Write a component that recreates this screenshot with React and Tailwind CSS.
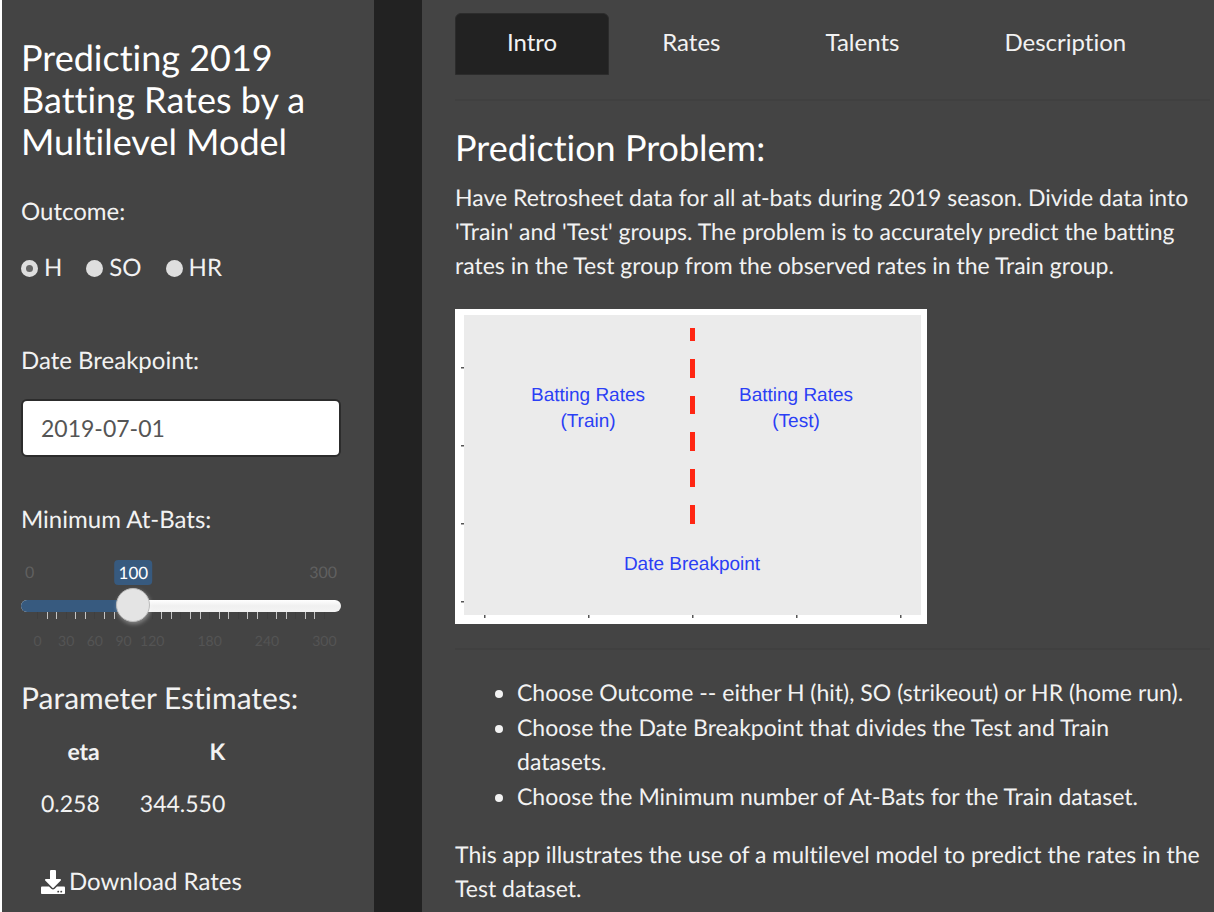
import { useState } from "react";
import { FaDownload } from "react-icons/fa";

const TABS = ["Intro", "Rates", "Talents", "Description"];
const OUTCOMES = ["H", "SO", "HR"];
const SCALE_LABELS = ["0", "30", "60", "90", "120", "", "180", "", "240", "", "300"];
const MAX_AT_BATS = 300;

const DASHES = [
  [19, 13],
  [50, 19],
  [87, 18],
  [123, 19],
  [160, 18],
  [196, 19],
];

function AtBatsSlider() {
  const [value, setValue] = useState(100);
  const ratio = value / MAX_AT_BATS;
  const center = `calc(17px + (100% - 34px) * ${ratio})`;

  return (
    <div>
      <label htmlFor="min-at-bats" className="block">
        Minimum At-Bats:
      </label>
      <div className="relative mt-6 flex h-6 items-center justify-between px-1 text-[16px] leading-6 text-[#606060]">
        <span>0</span>
        <span>300</span>
        <output
          htmlFor="min-at-bats"
          className="absolute -top-px -translate-x-1/2 rounded-[4px] bg-[#375a7f] px-1 text-[17px] leading-[25px] text-white"
          style={{ left: center }}
        >
          {value}
        </output>
      </div>
      <div className="relative mt-[3px] flex h-9 items-center">
        <div className="h-3 w-full overflow-hidden rounded-full bg-linear-to-b from-white via-[#f0f0f0] to-[#f4f4f4]">
          <div className="h-full bg-[#375a7f]" style={{ width: center }} />
        </div>
        <div className="absolute top-6 right-4 left-4 flex h-[7px] justify-between">
          {Array.from({ length: 31 }, (_, i) => (
            <span key={i} className={i % 3 === 0 ? "w-px bg-[#3f3f3f]" : "w-px bg-[#c4c4c4]"} />
          ))}
        </div>
        <input
          id="min-at-bats"
          type="range"
          min="0"
          max={MAX_AT_BATS}
          value={value}
          onChange={(e) => setValue(Number(e.target.value))}
          className="absolute inset-0 m-0 h-[34px] w-full cursor-pointer appearance-none bg-transparent [&::-webkit-slider-thumb]:size-[34px] [&::-webkit-slider-thumb]:appearance-none [&::-webkit-slider-thumb]:rounded-full [&::-webkit-slider-thumb]:border [&::-webkit-slider-thumb]:border-[#bbbbbb] [&::-webkit-slider-thumb]:bg-[#e4e4e4] [&::-webkit-slider-thumb]:shadow-[1px_2px_4px_rgba(255,255,255,0.35)]"
        />
      </div>
      <div className="mx-4 mt-[7px] flex justify-between text-[14px] leading-5 text-[#545454]">
        {SCALE_LABELS.map((label, i) => (
          <span key={i} className="flex w-px justify-center">
            {label}
          </span>
        ))}
      </div>
    </div>
  );
}

function BreakpointPlot() {
  return (
    <svg width="472" height="315" viewBox="0 0 472 315" role="img" aria-label="Train and Test batting rates split at the date breakpoint" className="block max-w-full">
      <rect width="472" height="315" fill="#ffffff" />
      <rect x="9" y="6" width="457" height="300" fill="#ebebeb" />
      {[58, 136, 214, 292].map((y) => (
        <rect key={y} x="6" y={y} width="3" height="1.5" fill="#555555" />
      ))}
      {[29, 133, 237, 341, 445].map((x) => (
        <rect key={x} x={x} y="306" width="1.5" height="3" fill="#555555" />
      ))}
      {DASHES.map(([y, h]) => (
        <rect key={y} x="235" y={y} width="5" height={h} fill="#ff2613" />
      ))}
      <g fill="#2b3ff5" fontFamily="'Liberation Sans', Arial, sans-serif" fontSize="19" textAnchor="middle">
        <text x="133" y="92">Batting Rates</text>
        <text x="133" y="118">(Train)</text>
        <text x="341" y="92">Batting Rates</text>
        <text x="341" y="118">(Test)</text>
        <text x="237" y="261">Date Breakpoint</text>
      </g>
    </svg>
  );
}

export default function App() {
  const [tab, setTab] = useState("Intro");
  const [outcome, setOutcome] = useState("H");
  const [date, setDate] = useState("2019-07-01");

  return (
    <div className="flex min-h-screen gap-12 border-l-2 border-white bg-[#222222] font-['Lato',sans-serif] text-[24px] leading-[34px] text-[#f2f2f2] [font-variant-ligatures:none] [text-rendering:geometricPrecision]">
      <aside className="w-[372px] shrink-0 bg-[#444444] pt-9 pr-[33px] pl-[19px]">
        <h1 className="text-[36px] leading-[42px] text-white">Predicting 2019 Batting Rates by a Multilevel Model</h1>

        <fieldset className="mt-[33px]">
          <legend>Outcome:</legend>
          <div className="mt-[22px] flex gap-6">
            {OUTCOMES.map((name) => (
              <label key={name} className="flex items-center gap-[6px]">
                <input
                  type="radio"
                  name="outcome"
                  value={name}
                  checked={outcome === name}
                  onChange={() => setOutcome(name)}
                  className="size-[17px] appearance-none rounded-full bg-[#dedede] checked:border-[5px] checked:border-[#dedede] checked:bg-[#666666]"
                />
                {name}
              </label>
            ))}
          </div>
        </fieldset>

        <div className="mt-[59px]">
          <label htmlFor="date-breakpoint" className="block">
            Date Breakpoint:
          </label>
          <input
            id="date-breakpoint"
            type="text"
            value={date}
            onChange={(e) => setDate(e.target.value)}
            className="mt-[21px] block h-[58px] w-full rounded-[6px] border-2 border-[#2c2c2c] bg-white px-[18px] text-[23px] text-[#555555]"
          />
        </div>

        <div className="mt-[46px]">
          <AtBatsSlider />
        </div>

        <h2 className="mt-[30px] text-[30px] leading-[34px]">Parameter Estimates:</h2>
        <table className="mt-2 text-right text-[23px]">
          <thead>
            <tr>
              <th scope="col" className="px-5 pt-[11px] pb-[9px] font-bold">eta</th>
              <th scope="col" className="px-5 pt-[11px] pb-[9px] font-bold">K</th>
            </tr>
          </thead>
          <tbody>
            <tr>
              <td className="px-5 py-[9px]">0.258</td>
              <td className="px-5 py-[9px]">344.550</td>
            </tr>
          </tbody>
        </table>

        <a href="#download" className="mt-9 ml-5 flex items-center gap-1">
          <FaDownload className="size-6 text-white" />
          Download Rates
        </a>
      </aside>

      <main className="min-w-0 flex-1 bg-[#444444] pt-[13px] pr-1 pl-[33px]">
        <div role="tablist" className="flex gap-px">
          {TABS.map((name) => (
            <button
              key={name}
              type="button"
              role="tab"
              aria-selected={tab === name}
              onClick={() => setTab(name)}
              className={
                tab === name
                  ? "h-[62px] rounded-t-[6px] border border-[#2c2c2c] bg-[#222222] px-[51px] pb-1"
                  : "h-[62px] rounded-t-[6px] border border-transparent px-[51px] pb-1"
              }
            >
              {name}
            </button>
          ))}
        </div>
        <hr className="mt-6 border-t-2 border-[#404040]" />

        <h2 className="mt-[25px] text-[36px] leading-[42px] text-white">Prediction Problem:</h2>
        <p className="mt-3 text-[23px]">
          Have Retrosheet data for all at-bats during 2019 season. Divide data into 'Train' and 'Test' groups. The
          problem is to accurately predict the batting rates in the Test group from the observed rates in the Train
          group.
        </p>
        <div className="mt-[27px]">
          <BreakpointPlot />
        </div>
        <hr className="mt-6 border-t-2 border-[#404040]" />

        <ul className="mt-[25px] list-disc space-y-px pr-2 pl-[62px] text-[23px]">
          <li>Choose Outcome -- either H (hit), SO (strikeout) or HR (home run).</li>
          <li>Choose the Date Breakpoint that divides the Test and Train datasets.</li>
          <li>Choose the Minimum number of At-Bats for the Train dataset.</li>
        </ul>
        <p className="mt-6 text-[23px]">
          This app illustrates the use of a multilevel model to predict the rates in the Test dataset.
        </p>
      </main>
    </div>
  );
}
